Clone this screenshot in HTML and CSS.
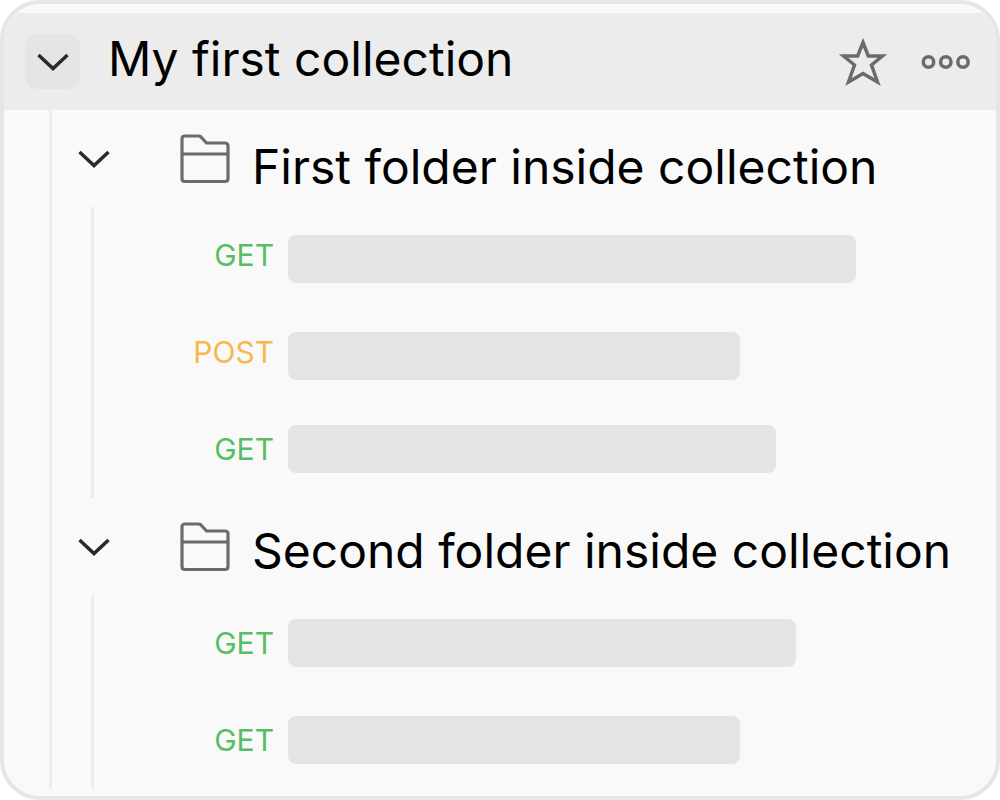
FILE: index.html
```html
<!DOCTYPE html>
<html lang="en">
<head>
<meta charset="utf-8">
<meta name="viewport" content="width=device-width, initial-scale=1">
<title>My first collection</title>
<link rel="stylesheet" href="styles.css">
</head>
<body>
<svg class="sprite" aria-hidden="true">
  <symbol id="chevron" viewBox="0 0 32 20"><path d="M1.500 3 16 16.500 30.500 3" fill="none" stroke="currentColor" stroke-width="3.500"/></symbol>
  <symbol id="folder" viewBox="0 0 50 50"><path d="M2 5Q2 2 5 2H18.500Q20 2 21 3L26.500 9H45Q48 9 48 12V44.500Q48 47.500 45 47.500H5Q2 47.500 2 44.500ZM2 20H48" fill="none" stroke="currentColor" stroke-width="3.200"/></symbol>
</svg>
<main class="card">
  <header class="collection">
    <button class="toggle toggle--filled" type="button" aria-label="Collapse collection" aria-expanded="true"><svg class="chevron"><use href="#chevron"/></svg></button>
    <h1 class="title collection__title">My first collection</h1>
    <button class="action" type="button" aria-label="Add to favourites">
      <svg width="48" height="50" viewBox="0 0 48 50"><path d="M24 5.500 29.300 19 43.500 19 32.500 28 38.500 45 24 36.500 9.500 45 15.500 28 4.500 19 18.700 19Z" fill="none" stroke="currentColor" stroke-width="3.500"/></svg>
    </button>
    <button class="action" type="button" aria-label="More actions">
      <svg width="50" height="16" viewBox="0 0 50 16"><g fill="none" stroke="currentColor" stroke-width="3.500"><circle cx="7.500" cy="8" r="5.200"/><circle cx="24.800" cy="8" r="5.200"/><circle cx="42" cy="8" r="5.200"/></g></svg>
    </button>
  </header>
  <div class="tree">
    <section class="group group--low">
      <div class="folder">
        <button class="toggle" type="button" aria-label="Collapse first folder" aria-expanded="true"><svg class="chevron"><use href="#chevron"/></svg></button>
        <svg class="folder__icon" aria-hidden="true"><use href="#folder"/></svg>
        <h2 class="title folder__title">First folder inside collection</h2>
      </div>
      <ul class="requests">
        <li class="request"><span class="method method--get">GET</span><span class="bar" style="width: 568px"></span></li>
        <li class="request"><span class="method method--post">POST</span><span class="bar" style="width: 452px"></span></li>
        <li class="request request--end"><span class="method method--get">GET</span><span class="bar" style="width: 488px"></span></li>
      </ul>
    </section>
    <section class="group">
      <div class="folder">
        <button class="toggle" type="button" aria-label="Collapse second folder" aria-expanded="true"><svg class="chevron"><use href="#chevron"/></svg></button>
        <svg class="folder__icon" aria-hidden="true"><use href="#folder"/></svg>
        <h2 class="title folder__title">Second folder inside collection</h2>
      </div>
      <ul class="requests">
        <li class="request"><span class="method method--get">GET</span><span class="bar" style="width: 508px"></span></li>
        <li class="request"><span class="method method--get">GET</span><span class="bar" style="width: 452px"></span></li>
      </ul>
    </section>
  </div>
</main>
</body>
</html>
```
FILE: styles.css
```css
* {
  box-sizing: border-box;
}

body {
  margin: 0;
  background: #fff;
  font-family: Inter, "Liberation Sans", sans-serif;
}

.sprite {
  display: none;
}

.card {
  min-height: 100vh;
  padding: 9px 0 7px;
  overflow: hidden;
  border: 4px solid #e6e6e6;
  border-radius: 40px;
  background: #f9f9f9;
}

.title {
  margin: 0;
  color: #000;
  font-size: 48px;
  font-weight: 400;
  line-height: 58px;
  white-space: nowrap;
}

.collection {
  display: flex;
  align-items: center;
  height: 97px;
  padding: 0 25px 0 21px;
  background: #ececec;
}

.collection__title {
  flex: 1;
  padding: 0 0 6px 28px;
}

.toggle,
.action {
  display: flex;
  flex: none;
  align-items: center;
  justify-content: center;
  padding: 0;
  border: 0;
  background: none;
  color: #6b6b6b;
}

.toggle {
  width: 55px;
  height: 55px;
  border-radius: 12px;
  color: #2a2a2a;
}

.toggle--filled {
  background: #e5e5e5;
}

.chevron {
  width: 32px;
  height: 20px;
}

.action + .action {
  margin-left: 34px;
}

.tree {
  margin-left: 45px;
  border-left: 3px solid #ececec;
}

.folder {
  display: flex;
  align-items: center;
  height: 97px;
  padding-left: 14px;
}

.folder__icon {
  flex: none;
  width: 50px;
  height: 50px;
  margin-left: 59px;
  color: #6b6b6b;
}

.folder__title {
  padding: 8px 0 0 22px;
}

.group--low .folder__title {
  padding-top: 16px;
}

.requests {
  margin: 0 20px 0 39px;
  padding: 0;
  border-left: 3px solid #ececec;
  list-style: none;
}

.request {
  display: flex;
  gap: 14px;
  height: 97px;
}

.method {
  flex: none;
  width: 180px;
  font-size: 30px;
  font-weight: 400;
  line-height: 96px;
  text-align: right;
}

.method--get {
  color: #58bd65;
}

.method--post {
  color: #f7b84c;
}

.bar {
  height: 48px;
  margin-top: 24px;
  border-radius: 8px;
  background: #e4e4e4;
}

.group--low .request:not(.request--end) .bar {
  margin-top: 28px;
}
```
